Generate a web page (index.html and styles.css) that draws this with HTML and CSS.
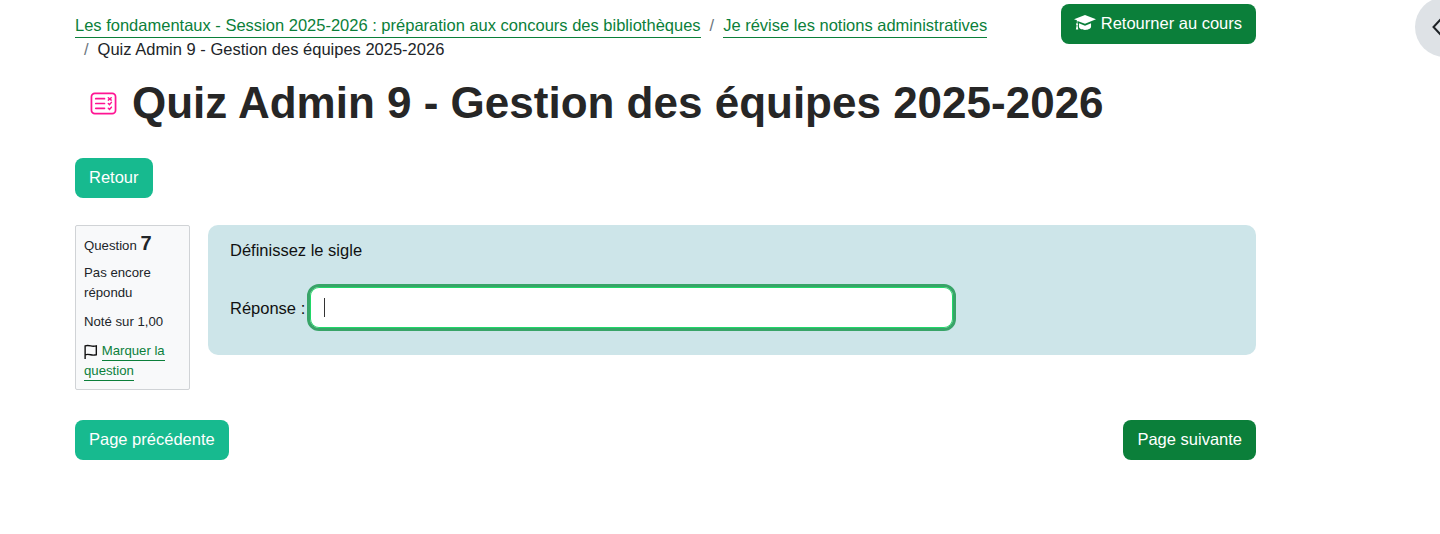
FILE: index.html
```html
<!DOCTYPE html>
<html lang="fr">
<head>
	<meta charset="UTF-8">
	<title>Quiz Admin 9 - Gestion des équipes 2025-2026</title>
	<link rel="stylesheet" href="styles.css">
</head>
<body>
	<div id="page">
		<div class="top">
			<ol class="crumbs">
				<li><a href="#">Les fondamentaux - Session 2025-2026 : préparation aux concours des bibliothèques</a></li>
				<li class="sep"><a href="#">Je révise les notions administratives</a></li>
				<li class="sep last">Quiz Admin 9 - Gestion des équipes 2025-2026</li>
			</ol>
			<a class="btn dark back-course" href="#">
				<svg class="cap" viewBox="0 0 20 16" width="22" height="18"><path fill="#fff" d="M10 .8 0 4.600l2.600 1v2.500c-.5.3-.7.7-.7 1.100 0 .4.200.7.500 1L1.700 14h2.200l-.7-3.800c.3-.3.500-.6.500-1 0-.4-.2-.8-.6-1V6.100L10 8.700l10-4.100z"/><path fill="#fff" d="M4.500 8.300v3.200c0 1.500 2.500 2.900 5.500 2.900s5.500-1.400 5.500-2.900V8.300L10 10.500z"/></svg>
				Retourner au cours
			</a>
		</div>

		<h1 class="title">
			<svg class="quiz-icon" viewBox="0 0 28 24" width="27" height="25" fill="none" stroke="#ff1493" stroke-width="1.800" stroke-linecap="round">
				<rect x="1.500" y="1.500" width="25" height="21" rx="3.500"/>
				<path d="M6 7h9M6 12h9M6 17h9"/>
				<path stroke-width="1.500" d="M19 6l3 2.500M22 6l-3 2.500M19 12l1.200 1.200 2-2.400M19 17l1.200 1.200 2-2.400"/>
			</svg>
			Quiz Admin 9 - Gestion des équipes 2025-2026
		</h1>

		<a class="btn light retour" href="#">Retour</a>

		<div class="question">
			<div class="info">
				<p class="qno">Question <strong>7</strong></p>
				<p>Pas encore répondu</p>
				<p>Noté sur 1,00</p>
				<p>
					<svg class="flag" viewBox="0 0 15 16" width="14" height="16" fill="none" stroke="#111" stroke-width="1.500"><path d="M1.200 15.500V1.500c2-.8 3.800-.6 6 0s3.800.5 6 0v9.500c-2.200.5-3.800.6-6 0s-4-.8-6 0"/></svg>
					<a href="#">Marquer la question</a>
				</p>
			</div>
			<div class="content">
				<p class="prompt">Définissez le sigle</p>
				<div class="answer">
					<label>Réponse :</label>
					<div class="field"><span class="caret"></span></div>
				</div>
			</div>
		</div>

		<div class="nav">
			<a class="btn light" href="#">Page précédente</a>
			<a class="btn dark" href="#">Page suivante</a>
		</div>
	</div>

	<div class="drawer-toggle">
		<svg viewBox="0 0 10 18" width="10" height="18" fill="none" stroke="#1d2125" stroke-width="2"><path d="M9 1 1.500 9 9 17"/></svg>
	</div>
</body>
</html>
```

FILE: styles.css
```css
*{
	margin: 0;
	padding: 0;
	box-sizing: border-box;
}
html, body{
	height: 100%;
	overflow: hidden;
}
body{
	background: #fff;
	font: 16.5px/24px "Liberation Sans", Arial, sans-serif;
	color: #212529;
}
a{
	text-decoration: none;
}
#page{
	width: 1181px;
	margin-left: 75px;
	padding-top: 4px;
}
.top{
	display: flex;
	justify-content: space-between;
	align-items: flex-start;
}
.crumbs{
	list-style: none;
	display: flex;
	flex-wrap: wrap;
	width: 960px;
	padding-top: 9px;
}
.crumbs a{
	color: #0b7f3a;
	border-bottom: 1px solid #0b7f3a;
	padding-bottom: 3px;
}
.crumbs .sep::before{
	content: "/";
	color: #6c757d;
	padding: 0 9px;
}
.btn{
	display: inline-block;
	height: 40px;
	padding: 7px 14px;
	border-radius: 8px;
	color: #fff;
	font-size: 16.5px;
	line-height: 24px;
}
.btn.dark{
	background: #0b7f3a;
}
.btn.light{
	background: #17ba8f;
}
.back-course{
	padding-left: 13px;
}
.cap{
	vertical-align: -3px;
}
.title{
	display: flex;
	align-items: center;
	margin-top: 14px;
	padding-left: 15px;
	font-size: 44px;
	line-height: 56px;
	font-weight: 700;
	color: #262626;
}
.quiz-icon{
	margin-right: 15px;
}
.retour{
	margin-top: 27px;
}
.question{
	display: flex;
	align-items: flex-start;
	gap: 18px;
	margin-top: 27px;
}
.info{
	width: 115px;
	height: 165px;
	padding: 5px 8px;
	background: #f8f9fa;
	border: 1px solid #d0d3d6;
	border-radius: 2px;
	font-size: 13.2px;
	line-height: 20px;
}
.info p{
	margin-bottom: 9px;
}
.info .qno{
	margin-bottom: 7px;
}
.info strong{
	font-size: 20px;
	line-height: 24px;
}
.info a{
	color: #0b7f3a;
	border-bottom: 1px solid #0b7f3a;
	padding-bottom: 2px;
}
.flag{
	vertical-align: -5px;
}
.content{
	flex: 1;
	height: 130px;
	padding: 13px 22px;
	background: #cde5e9;
	border-radius: 10px;
	color: #111;
}
.answer{
	display: flex;
	align-items: center;
	gap: 2px;
	margin-top: 22px;
}
.field{
	display: flex;
	align-items: center;
	width: 649px;
	height: 47px;
	padding-left: 14px;
	background: #fff;
	border: 3px solid #38a468;
	box-shadow: inset 0 0 0 1px #20d868;
	border-radius: 12px;
}
.caret{
	width: 1px;
	height: 19px;
	background: #333;
}
.nav{
	display: flex;
	justify-content: space-between;
	margin-top: 30px;
}
.drawer-toggle{
	position: absolute;
	left: 1415px;
	top: -3px;
	width: 60px;
	height: 60px;
	padding: 21px 0 0 17px;
	background: #dee2e6;
	border-radius: 50%;
}
```
